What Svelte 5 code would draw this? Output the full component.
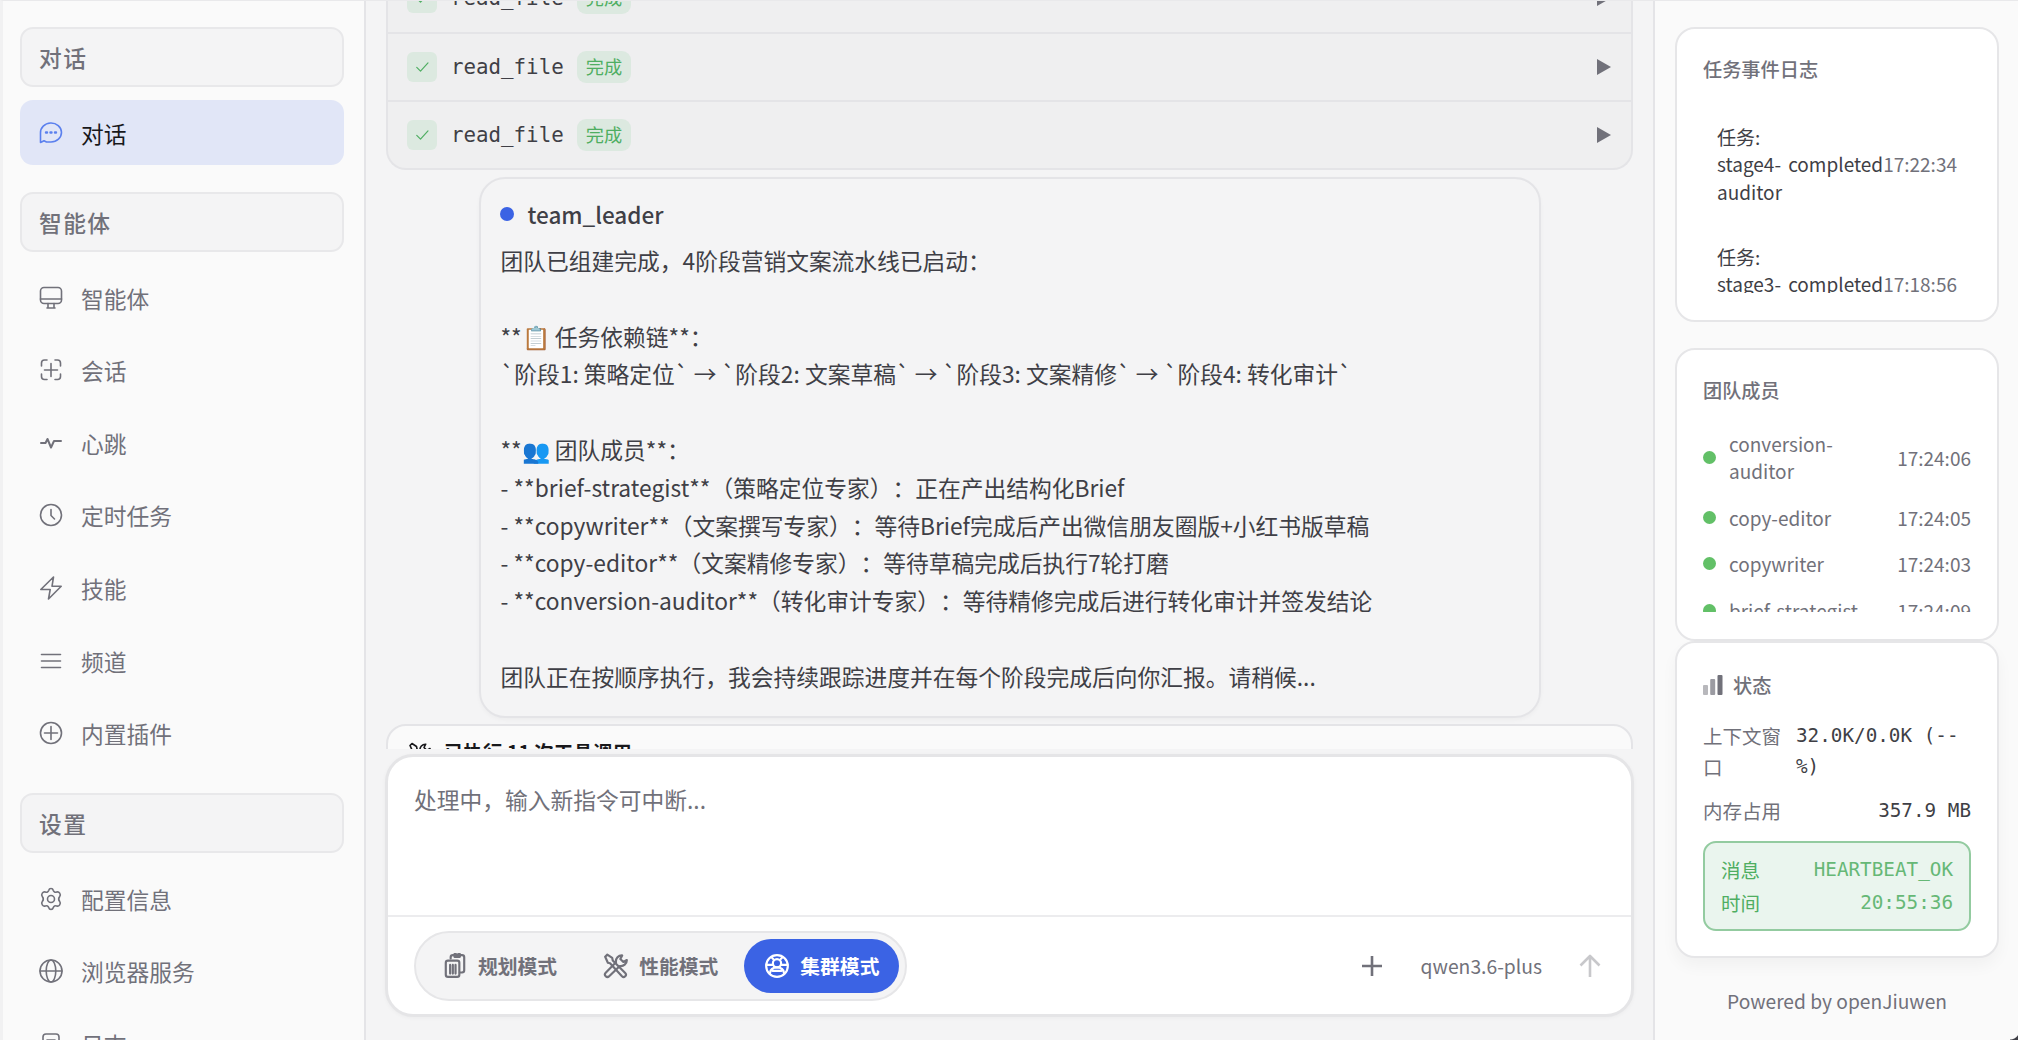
<script lang="ts">
	const sections = [
		{ title: '对话', items: [{ label: '对话', icon: 'chat', active: true }] },
		{
			title: '智能体',
			items: [
				{ label: '智能体', icon: 'monitor' },
				{ label: '会话', icon: 'scan' },
				{ label: '心跳', icon: 'pulse' },
				{ label: '定时任务', icon: 'clock' },
				{ label: '技能', icon: 'bolt' },
				{ label: '频道', icon: 'menu' },
				{ label: '内置插件', icon: 'plugin' }
			]
		},
		{
			title: '设置',
			items: [
				{ label: '配置信息', icon: 'gear' },
				{ label: '浏览器服务', icon: 'globe' },
				{ label: '日志', icon: 'log' }
			]
		}
	];

	const toolCalls = ['read_file', 'read_file', 'read_file'];

	const message = [
		'团队已组建完成，4阶段营销文案流水线已启动：',
		'',
		'**📋 任务依赖链**：',
		'`阶段1: 策略定位` → `阶段2: 文案草稿` → `阶段3: 文案精修` → `阶段4: 转化审计`',
		'',
		'**👥 团队成员**：',
		'- **brief-strategist**（策略定位专家）：正在产出结构化Brief',
		'- **copywriter**（文案撰写专家）：等待Brief完成后产出微信朋友圈版+小红书版草稿',
		'- **copy-editor**（文案精修专家）：等待草稿完成后执行7轮打磨',
		'- **conversion-auditor**（转化审计专家）：等待精修完成后进行转化审计并签发结论',
		'',
		'团队正在按顺序执行，我会持续跟踪进度并在每个阶段完成后向你汇报。请稍候...'
	];

	const modes = [
		{ label: '规划模式', icon: 'clipboard' },
		{ label: '性能模式', icon: 'tools' },
		{ label: '集群模式', icon: 'cluster' }
	];
	let mode = $state('集群模式');

	const events = [
		{ name: '任务: stage4-auditor', status: 'completed', time: '17:22:34' },
		{ name: '任务: stage3-editor', status: 'completed', time: '17:18:56' }
	];

	const members = [
		{ name: 'conversion-auditor', time: '17:24:06' },
		{ name: 'copy-editor', time: '17:24:05' },
		{ name: 'copywriter', time: '17:24:03' },
		{ name: 'brief-strategist', time: '17:24:09' }
	];
</script>

{#snippet icon(name: string)}
	<svg class="icon" viewBox="0 0 24 24" aria-hidden="true">
		{#if name === 'chat'}
			<path d="M1.5 21.5V12A10.500 9.500 0 1 1 12 21H7.500L5 19.800Z" />
			<path d="M7 11.500h1M11.500 11.500h1M16 11.500h1" stroke-width="2.400" />
		{:else if name === 'monitor'}
			<rect x="1.500" y="1.500" width="21" height="16" rx="3.500" />
			<path d="M1.500 13h21M9 17.500v4M15 17.500v4M8 22h8" />
		{:else if name === 'scan'}
			<path d="M2.500 8V5a3 3 0 0 1 3-3H8M16 2h2.500a3 3 0 0 1 3 3v3M21.500 16v2.500a3 3 0 0 1-3 3H16M8 21.500H5.500a3 3 0 0 1-3-3V16M12 5.500v13M5.500 12h13" />
		{:else if name === 'pulse'}
			<path d="M2 12h4.500l2-4 3.500 8.500 3-6.500h7" stroke-width="2" />
		{:else if name === 'clock'}
			<circle cx="12" cy="12" r="10.500" />
			<path d="M12 6.500v6l3.500 3.500" />
		{:else if name === 'bolt'}
			<path d="M14.500 1 1.800 13.500h9.400L9.500 23 22.200 10.300h-9.200Z" />
		{:else if name === 'menu'}
			<path d="M2.500 5.500h19M2.500 12h19M2.500 18.500h19" />
		{:else if name === 'plugin'}
			<circle cx="12" cy="12" r="10.500" />
			<path d="M12 5.500v13M5.500 12h13" />
		{:else if name === 'gear'}
			<path d="M9.800 3.200C10.300 1 13.700 1 14.200 3.200c.5 1.700 1.900 2.400 3.500 1.800 2.400-.8 4.600 2.400 3 4.400-1.200 1.500-1.200 3.700 0 5.200 1.600 2-.6 5.200-3 4.400-1.600-.6-3 .1-3.500 1.800-.5 2.200-3.900 2.200-4.400 0-.5-1.700-1.900-2.400-3.500-1.800-2.400.8-4.600-2.400-3-4.400 1.200-1.500 1.200-3.700 0-5.200-1.600-2 .6-5.200 3-4.400 1.600.6 3-.1 3.500-1.800Z" />
			<circle cx="12" cy="12" r="3.500" />
		{:else if name === 'globe'}
			<circle cx="12" cy="12" r="11" />
			<ellipse cx="12" cy="12" rx="4.800" ry="11" />
			<path d="M1 12h22" />
		{:else if name === 'log'}
			<rect x="4" y="2" width="16" height="20" rx="3" />
			<path d="M8 8h8M8 12h8M8 16h5" />
		{:else if name === 'clipboard'}
			<path d="M8 5V4a2 2 0 0 1 2-2h8.500a2 2 0 0 1 2 2v12a2 2 0 0 1-2 2h-2M11.500 2a2 2 0 0 1 5 0v1.500h-5Z" />
			<rect x="3.500" y="7" width="12.500" height="15" rx="2" />
			<path d="M7.500 11v8M10 11v8M12.500 11v8" />
		{:else if name === 'tools'}
			<path d="M2 3.500 4 1.500 8.500 4.500 9 7l11.500 11.500a2 2 0 0 1-3 3L6.500 9.500 4.500 9Z" />
			<path d="M22 6.500 18.800 8.300 16 5.500 17.700 2.200A5.500 5.500 0 0 0 12 8.500L2.500 18.200a2.200 2.200 0 0 0 3.200 3.200L15.500 12A5.500 5.500 0 0 0 22 6.500Z" />
		{:else if name === 'cluster'}
			<circle cx="12" cy="12" r="10" />
			<circle cx="12" cy="9.500" r="3.800" />
			<path d="M5.500 18.500c.5-4 3-5.200 6.500-5.200s6 1.200 6.500 5.200M2.500 11h5.500M16 11h5.500M8 16.500h8M8.500 5.500 7 4M15.500 5.500 17 4" />
		{:else if name === 'check'}
			<path d="m5 12.500 5 5L20 6.500" />
		{:else if name === 'plus'}
			<path d="M12 2v20M2 12h20" />
		{:else if name === 'up'}
			<path d="M12 23V2M2.500 11.500 12 2l9.500 9.500" />
		{/if}
	</svg>
{/snippet}

<div class="app">
	<nav class="sidebar">
		{#each sections as section (section.title)}
			<div class="nav-group">
				<h2 class="nav-title">{section.title}</h2>
				{#each section.items as item (item.icon)}
					<a class="nav-item" class:active={item.active} href="#{item.icon}">
						{@render icon(item.icon)}
						<span>{item.label}</span>
					</a>
				{/each}
			</div>
		{/each}
	</nav>

	<main class="chat">
		<div class="stream">
			<div class="tools">
				{#each toolCalls as call, i (i)}
					<div class="tool-row">
						<span class="check">{@render icon('check')}</span>
						<code>{call}</code>
						<span class="badge">完成</span>
						<span class="arrow"></span>
					</div>
				{/each}
			</div>

			<article class="message">
				<header><span class="dot"></span>team_leader</header>
				{#each message as line, i (i)}
					<p>{line}</p>
				{/each}
			</article>

			<div class="summary">
				{@render icon('tools')}
				<strong>已执行 11 次工具调用</strong>
			</div>
		</div>

		<div class="composer">
			<textarea placeholder="处理中，输入新指令可中断..."></textarea>
			<div class="toolbar">
				<div class="modes">
					{#each modes as m (m.label)}
						<button class:active={mode === m.label} type="button" onclick={() => (mode = m.label)}>
							{@render icon(m.icon)}{m.label}
						</button>
					{/each}
				</div>
				<div class="actions">
					<span class="add">{@render icon('plus')}</span>
					<span class="model">qwen3.6-plus</span>
					<span class="send">{@render icon('up')}</span>
				</div>
			</div>
		</div>
	</main>

	<aside class="panel">
		<section class="card events">
			<h3>任务事件日志</h3>
			<div class="event-list">
				{#each events as event (event.time)}
					<div class="event">
						<span class="event-name">{event.name}</span>
						<span>{event.status}</span>
						<time>{event.time}</time>
					</div>
				{/each}
			</div>
		</section>

		<section class="card members">
			<h3>团队成员</h3>
			<div class="member-list">
				{#each members as member (member.name)}
					<div class="member">
						<span class="dot online"></span>
						<span class="member-name">{member.name}</span>
						<time>{member.time}</time>
					</div>
				{/each}
			</div>
		</section>

		<section class="card status">
			<h3>
				<svg class="bars" viewBox="0 0 20 20" aria-hidden="true">
					<rect x="0" y="10" width="5" height="10" rx="1" opacity="0.5" />
					<rect x="7.200" y="4" width="5" height="16" rx="1" opacity="0.700" />
					<rect x="14.500" y="0" width="5" height="20" rx="1" />
				</svg>
				状态
			</h3>
			<div class="stat">
				<span>上下文窗口</span>
				<code>32.0K/0.0K (--%)</code>
			</div>
			<div class="stat">
				<span>内存占用</span>
				<code>357.9 MB</code>
			</div>
			<div class="heartbeat">
				<div><span>消息</span><code>HEARTBEAT_OK</code></div>
				<div><span>时间</span><code>20:55:36</code></div>
			</div>
		</section>

		<footer>Powered by openJiuwen</footer>
	</aside>
	<span class="corner"></span>
</div>

<style>
	:global(body) {
		margin: 0;
		overflow: hidden;
	}

	.app {
		--border: #e4e4e7;
		--muted: #71717a;
		--text: #3f3f46;
		--green: #4fae62;
		position: relative;
		display: flex;
		box-sizing: border-box;
		width: 2018px;
		height: 1040px;
		overflow: hidden;
		border-top: 1px solid #e9e9eb;
		border-left: 3px solid #f1f1f2;
		background: #f4f4f5;
		color: var(--text);
		font-family: 'Noto Sans CJK SC', sans-serif;
		font-size: 22.75px;
	}

	.app :global(*) {
		box-sizing: border-box;
	}

	h2,
	h3,
	p {
		margin: 0;
		font-weight: 500;
	}

	code {
		font-family: 'DejaVu Sans Mono', monospace;
	}

	.icon {
		flex: none;
		width: 24px;
		height: 24px;
		fill: none;
		stroke: currentColor;
		stroke-width: 1.6;
		stroke-linecap: round;
		stroke-linejoin: round;
	}

	.sidebar {
		flex: none;
		width: 363px;
		padding: 26px 20px 0 17px;
		border-right: 2px solid var(--border);
		background: #fafafa;
	}

	.nav-group {
		display: flex;
		flex-direction: column;
		gap: 7.6px;
		margin-bottom: 27px;
	}

	.nav-group:nth-child(2) {
		margin-bottom: 28px;
	}

	.nav-title {
		height: 60px;
		margin-bottom: 5px;
		padding: 2px 17px 0;
		border: 2px solid #e8e8ea;
		border-radius: 13px;
		background: #f4f4f5;
		color: var(--muted);
		font-size: 22.75px;
		line-height: 54px;
		letter-spacing: 1.4px;
	}

	.nav-item {
		display: flex;
		align-items: center;
		gap: 18px;
		height: 65px;
		padding: 0 19px;
		border-radius: 13px;
		color: var(--muted);
		text-decoration: none;
	}

	.nav-item span {
		padding-top: 3px;
	}

	.nav-item .icon {
		margin-top: 2px;
	}

	.nav-item.active {
		background: #e1e6f7;
		color: #18181b;
	}

	.nav-item.active .icon {
		color: #5b80ee;
	}

	.chat {
		display: flex;
		flex: none;
		flex-direction: column;
		width: 1287px;
		padding: 0 20px 0 20px;
	}

	.stream {
		display: flex;
		flex: none;
		flex-direction: column;
		height: 748px;
		overflow: hidden;
	}

	.tools {
		flex: none;
		margin-top: -37px;
		border: 2px solid var(--border);
		border-top: 0;
		border-radius: 0 0 20px 20px;
		background: #efeff0;
	}

	.tool-row {
		display: flex;
		align-items: center;
		height: 68px;
		padding: 0 20px 1px 19px;
	}

	.tool-row + .tool-row {
		border-top: 2px solid var(--border);
	}

	.check {
		display: grid;
		width: 30px;
		height: 30px;
		margin-right: 14px;
		place-items: center;
		border-radius: 6px;
		background: #dce9e0;
		color: var(--green);
	}

	.check .icon {
		width: 18px;
		height: 18px;
	}

	.tool-row code {
		font-size: 20.8px;
	}

	.badge {
		height: 32px;
		margin-left: 13px;
		padding: 0 9px;
		border-radius: 9px;
		background: #dce9e0;
		color: var(--green);
		font-size: 18.2px;
		line-height: 30px;
	}

	.arrow {
		margin-left: auto;
		border: 8px solid transparent;
		border-right: 0;
		border-left: 14px solid var(--muted);
	}

	.message {
		flex: none;
		width: 1062px;
		height: 541px;
		margin: 7px auto 6px;
		padding: 14px 19px;
		border: 2px solid var(--border);
		border-radius: 26px;
		box-shadow: 0 2px 4px rgb(0 0 0 / 3%);
		text-spacing-trim: space-all;
	}

	.message header {
		display: flex;
		align-items: center;
		gap: 14px;
		height: 42px;
		margin-bottom: 7px;
		font-size: 22.5px;
		font-weight: 500;
	}

	.dot {
		flex: none;
		width: 14px;
		height: 14px;
		border-radius: 50%;
		background: #3b63e4;
	}

	.message p {
		height: 37.8px;
		padding-left: 1px;
		font-weight: 400;
		line-height: 37.8px;
		white-space: pre;
	}

	.summary {
		display: flex;
		flex: none;
		gap: 12px;
		height: 68px;
		padding: 13px 20px;
		border: 2px solid var(--border);
		border-radius: 20px;
		background: #fafafa;
		color: #18181b;
		font-size: 19.5px;
		line-height: 26px;
	}

	.summary .icon {
		margin-top: 3px;
	}

	.composer {
		display: flex;
		flex: none;
		flex-direction: column;
		height: 263px;
		margin: 5px -1px 0;
		border: 3px solid #e5e5e7;
		border-radius: 28px;
		background: #fff;
		box-shadow: 0 1px 4px rgb(0 0 0 / 4%);
	}

	textarea {
		flex: 1;
		padding: 24px 26px;
		border: 0;
		background: none;
		font: inherit;
		line-height: 37px;
		resize: none;
	}

	textarea::placeholder {
		color: var(--muted);
	}

	.toolbar {
		display: flex;
		align-items: center;
		justify-content: space-between;
		height: 99px;
		padding: 0 29px 0 26px;
		border-top: 2px solid #ececee;
	}

	.modes {
		display: flex;
		gap: 6px;
		height: 70px;
		padding: 6px;
		border: 2px solid #e6e6e8;
		border-radius: 35px;
		background: #f4f4f5;
	}

	.modes button {
		display: flex;
		align-items: center;
		gap: 10px;
		height: 54px;
		padding: 0 20px;
		border: 0;
		border-radius: 27px;
		background: none;
		color: var(--muted);
		font: inherit;
		font-size: 19.8px;
		font-weight: 700;
	}

	.modes .icon {
		width: 26px;
		height: 26px;
		stroke-width: 2;
	}

	.modes button.active {
		background: #3b63e4;
		color: #fff;
	}

	.actions {
		display: flex;
		align-items: center;
		color: var(--muted);
		font-size: 19.3px;
	}

	.actions .icon {
		display: block;
		stroke-width: 2.6;
		stroke-linecap: butt;
	}

	.model {
		margin: 0 36px 0 37px;
	}

	.send {
		color: #c8c8cb;
	}

	.panel {
		flex: 1;
		padding: 26px 19px 0 20px;
		border-left: 2px solid var(--border);
		background: #fafafa;
		font-size: 19.5px;
	}

	.card {
		width: 324px;
		padding: 26px;
		border: 2px solid #e6e6e8;
		border-radius: 20px;
		background: #fff;
	}

	.card h3 {
		display: flex;
		align-items: center;
		gap: 10px;
		height: 32px;
		color: var(--muted);
		font-size: 19.2px;
	}

	.events h3,
	.members h3 {
		height: 28px;
		margin-bottom: 4px;
	}

	time {
		color: var(--muted);
	}

	.events {
		height: 295px;
		margin-bottom: 26px;
	}

	.event-list {
		height: 206px;
		padding-top: 17px;
		overflow: hidden;
		font-size: 19px;
	}

	.event {
		display: flex;
		align-items: center;
		padding: 19px 14px;
		line-height: 27.3px;
	}

	.event-name {
		flex: 1;
	}

	.members {
		height: 293px;
	}

	.member-list {
		height: 204px;
		padding-top: 22px;
		overflow: hidden;
		color: var(--muted);
		font-size: 19px;
	}

	.member {
		display: flex;
		align-items: center;
		margin-bottom: 19.5px;
		line-height: 27px;
	}

	.member-name {
		width: 130px;
		margin-left: 13px;
		white-space: nowrap;
	}

	.member:first-child .member-name {
		width: 110px;
		white-space: normal;
	}

	.member time {
		margin-left: auto;
	}

	.online {
		width: 13px;
		height: 13px;
		background: #62c067;
	}

	.status {
		height: 317px;
		box-shadow: 0 8px 16px rgb(0 0 0 / 4%);
	}

	.status h3 {
		margin-bottom: 20px;
	}

	.bars {
		width: 20px;
		height: 20px;
		fill: var(--muted);
	}

	.stat {
		display: flex;
		justify-content: space-between;
		gap: 14px;
		margin-bottom: 14px;
		color: var(--muted);
		line-height: 30.5px;
	}

	.stat span {
		max-width: 79px;
	}

	.stat code {
		max-width: 175px;
		color: var(--text);
		font-size: 19.3px;
	}

	.heartbeat {
		height: 90px;
		padding: 10px 16px;
		border: 2px solid #93cba0;
		border-radius: 13px;
		background: #eaf5ee;
		color: var(--green);
		line-height: 33px;
	}

	.heartbeat div {
		display: flex;
		justify-content: space-between;
	}

	.heartbeat code {
		font-size: 19.3px;
		opacity: 0.85;
	}

	footer {
		margin-top: 27px;
		color: var(--muted);
		font-size: 19.2px;
		line-height: 32px;
		text-align: center;
	}

	/* Window edge */
	.corner {
		position: absolute;
		right: 0;
		bottom: 0;
		width: 8px;
		height: 10px;
		background: radial-gradient(circle at 0 0, transparent 9px, #3f3f46 10px);
	}
</style>
